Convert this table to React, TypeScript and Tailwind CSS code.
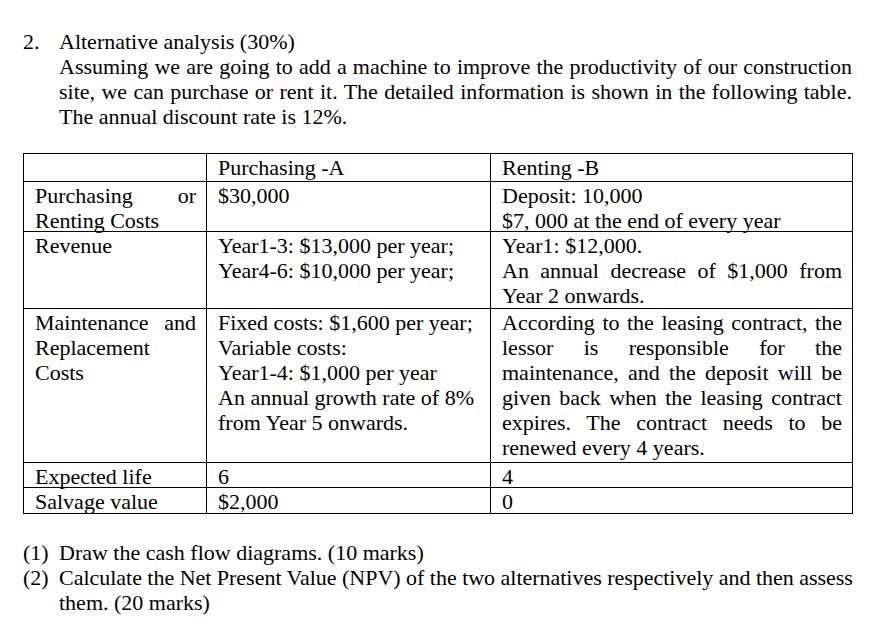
function J({ children }: { children: React.ReactNode }) {
  // a single justified line (stretched to the full width)
  return <div className="text-justify [text-align-last:justify] whitespace-nowrap">{children}</div>;
}

function Td({ children }: { children?: React.ReactNode }) {
  return (
    <td className="border border-black align-top pt-[1px] pl-[11px] pr-[10px]">
      <div className="-mb-[3px]">{children}</div>
    </td>
  );
}

export default function App() {
  return (
    <div className="min-h-screen bg-white text-black font-['Liberation_Serif',serif] text-[22px] leading-[25px]">
      <div className="pt-[29px] px-[23px]">
        {/* Question heading */}
        <div className="flex">
          <div className="w-[36px] shrink-0">2.</div>
          <div className="flex-1 pr-[7px]">
            <div>Alternative analysis (30%)</div>
            <J>Assuming we are going to add a machine to improve the productivity of our construction</J>
            <J>site, we can purchase or rent it. The detailed information is shown in the following table.</J>
            <div>The annual discount rate is 12%.</div>
          </div>
        </div>

        {/* Table */}
        <table className="mt-[24px] table-fixed border-collapse w-[829px]">
          <colgroup>
            <col className="w-[183px]" />
            <col className="w-[284px]" />
            <col className="w-[362px]" />
          </colgroup>
          <tbody>
            <tr className="h-[28px]">
              <Td />
              <Td>Purchasing -A</Td>
              <Td>Renting -B</Td>
            </tr>
            <tr className="h-[50px]">
              <Td>
                <J>Purchasing or</J>
                <div>Renting Costs</div>
              </Td>
              <Td>$30,000</Td>
              <Td>
                <div>Deposit: 10,000</div>
                <div>$7, 000 at the end of every year</div>
              </Td>
            </tr>
            <tr className="h-[77px]">
              <Td>Revenue</Td>
              <Td>
                <div>Year1-3: $13,000 per year;</div>
                <div>Year4-6: $10,000 per year;</div>
              </Td>
              <Td>
                <div>Year1: $12,000.</div>
                <J>An annual decrease of $1,000 from</J>
                <div>Year 2 onwards.</div>
              </Td>
            </tr>
            <tr className="h-[154px]">
              <Td>
                <J>Maintenance and</J>
                <div>Replacement</div>
                <div>Costs</div>
              </Td>
              <Td>
                <div>Fixed costs: $1,600 per year;</div>
                <div>Variable costs:</div>
                <div>Year1-4: $1,000 per year</div>
                <div>An annual growth rate of 8%</div>
                <div>from Year 5 onwards.</div>
              </Td>
              <Td>
                <J>According to the leasing contract, the</J>
                <J>lessor is responsible for the</J>
                <J>maintenance, and the deposit will be</J>
                <J>given back when the leasing contract</J>
                <J>expires. The contract needs to be</J>
                <div>renewed every 4 years.</div>
              </Td>
            </tr>
            <tr className="h-[25px]">
              <Td>Expected life</Td>
              <Td>6</Td>
              <Td>4</Td>
            </tr>
            <tr className="h-[26px]">
              <Td>Salvage value</Td>
              <Td>$2,000</Td>
              <Td>0</Td>
            </tr>
          </tbody>
        </table>

        {/* Sub-questions */}
        <div className="mt-[26px]">
          <div className="flex">
            <div className="w-[36px] shrink-0">(1)</div>
            <div className="flex-1">Draw the cash flow diagrams. (10 marks)</div>
          </div>
          <div className="flex">
            <div className="w-[36px] shrink-0">(2)</div>
            <div className="flex-1">
              <div className="whitespace-nowrap tracking-[-0.02px]">
                Calculate the Net Present Value (NPV) of the two alternatives respectively and then assess
              </div>
              <div>them. (20 marks)</div>
            </div>
          </div>
        </div>
      </div>
    </div>
  );
}
